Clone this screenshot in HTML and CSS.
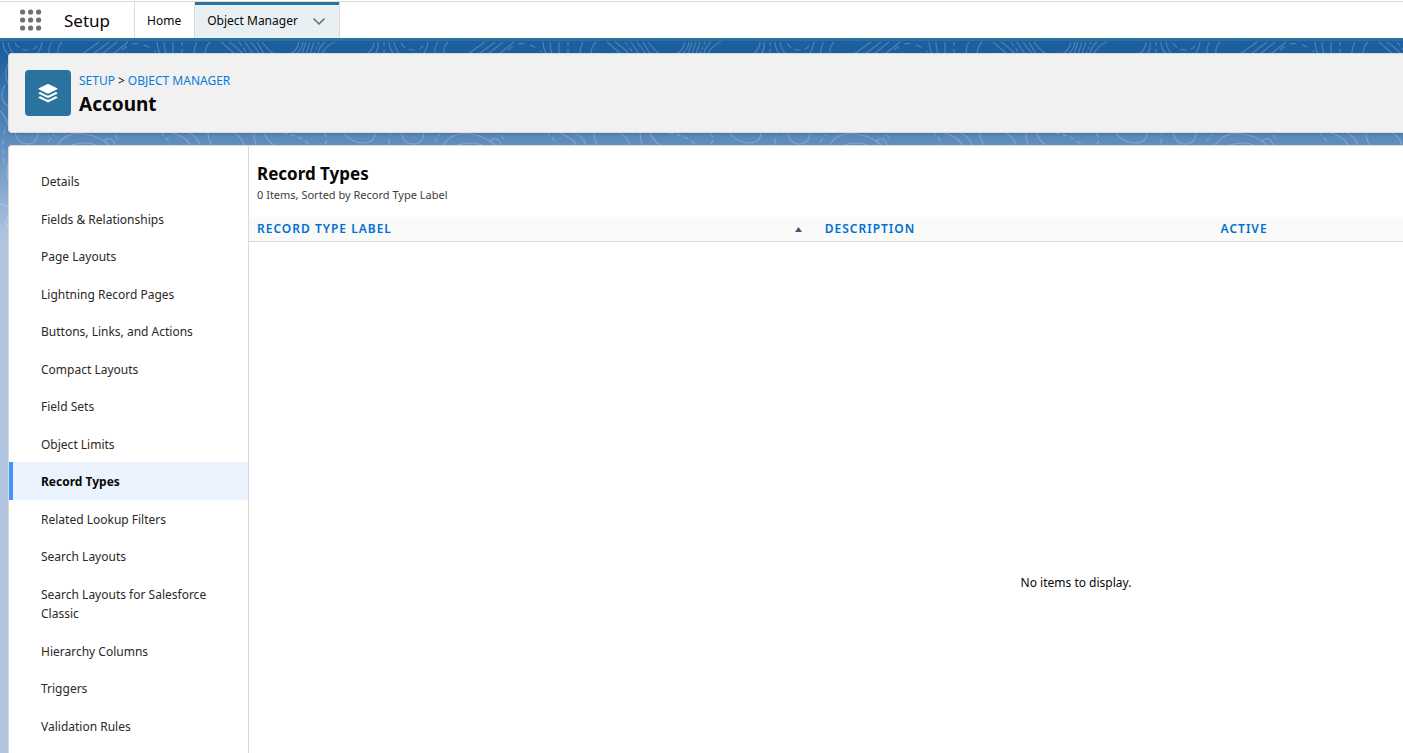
FILE: index.html
```html
<!DOCTYPE html>
<html lang="en">
<head>
<meta charset="utf-8">
<title>Account | Object Manager</title>
<link rel="stylesheet" href="styles.css">
</head>
<body>
<header class="global-nav">
  <button class="launcher" type="button" aria-label="App Launcher">
    <svg viewBox="0 0 22 22" width="22" height="22" fill="#706e6b">
      <circle cx="2.600" cy="3" r="2.600"/><circle cx="10.600" cy="3" r="2.600"/><circle cx="18.600" cy="3" r="2.600"/>
      <circle cx="2.600" cy="11" r="2.600"/><circle cx="10.600" cy="11" r="2.600"/><circle cx="18.600" cy="11" r="2.600"/>
      <circle cx="2.600" cy="19" r="2.600"/><circle cx="10.600" cy="19" r="2.600"/><circle cx="18.600" cy="19" r="2.600"/>
    </svg>
  </button>
  <span class="app-name">Setup</span>
  <nav class="tabs" aria-label="Setup">
    <a class="tab" href="#">Home</a>
    <div class="tab tab-active">
      <a href="#">Object Manager</a>
      <button class="tab-menu" type="button" aria-label="Object Manager menu">
        <svg viewBox="0 0 14 9" width="14" height="9" fill="none" stroke="#706e6b" stroke-width="1.600" stroke-linecap="round" stroke-linejoin="round"><path d="M2 2 7 7l5-5"/></svg>
      </button>
    </div>
  </nav>
</header>

<div class="stage">
  <svg class="contours" aria-hidden="true">
    <defs>
      <pattern id="contour" width="386" height="240" patternUnits="userSpaceOnUse">
        <g fill="none" stroke="#fff" stroke-width="1.200">
          <path d="M3 1c0 5 1 8 5 12M8 1c1 5 2 9 6 12M52 1q-4 5-3 12M62 1q-5 5-4 12"/>
          <path d="M42 1q-1 7-5 12"/>
          <path d="M15 2q4 7 13 7t10-8" stroke-dasharray="6 4"/>
          <path d="M82 13q10-7 17-12M93 13l16-12M102 13l15-12M113 13q9-7 15-12"/>
          <path d="M122 9q14-14 34 2" stroke-dasharray="6 6"/>
          <path d="M157 1q0 6 3 12M164 1q0 6 2 12M173 1v12M194 13q0-7 3-12M205 13q0-7 5-12"/>
          <path d="M182 1v12" stroke-dasharray="4 3"/>
          <path d="M221 1l14 12M229 1q9 6 14 12M245 1l8 12M251 1l9 12M257 1l7 12M262 1q6 8 12 12"/>
          <path d="M239 1l9 12" stroke-dasharray="5 2"/>
          <path d="M290 13q7-3 9-12M296 13q6-4 7-12M302 13l4-12M306 13l4-12M310 13l4-12M318 13q1-7 7-12M322 13q4-9 13-12"/>
          <path d="M314 13l5-12" stroke-dasharray="3 2"/>
          <path d="M367 13q7-5 7-12M375 13q4-5 3-12"/>
          <path d="M384 1v12" stroke-dasharray="4 3"/>
          <path d="M15 90q2 14 14 13 9-1 9-12"/>
          <path d="M48 101l6-8M115 94l5 7" stroke-dasharray="5 3"/>
          <path d="M57 104q10-14 28-11 14 2 24 11M104 100q8-6 11 4M72 104q14-4 24 0"/>
          <path d="M160 91q7 4 10 13" stroke-dasharray="5 3"/>
          <path d="M170 91q17 5 20 13M187 91q11 5 13 13M208 91q0 8 4 13M233 91q9 5 11 13M254 91q0 7 2 13M264 91q3 9 10 13"/>
          <path d="M282 92q18 2 28 12M324 92q6 6 0 12" stroke-dasharray="5 3"/>
          <path d="M343 91q8 11 20 11t12-11"/>
          <path d="M5 88q-4 18 0 40" stroke-dasharray="6 4"/>
          <path d="M9 20q-7 16 1 25M5 44q-8 14 4 22M0 70q6 6 8 14M9 120q-5 10 1 24M0 163q7 0 9 5M9 174q-6 7 0 14"/>
        </g>
      </pattern>
    </defs>
    <rect width="100%" height="190" fill="url(#contour)"/>
  </svg>

  <section class="page-header">
    <span class="object-icon">
      <svg viewBox="0 0 22 20" width="22" height="20" fill="#fff">
        <path d="M10.200 1.200q.8-.4 1.600 0l8.400 4.100q.7.500 0 1l-8.400 4.100q-.8.400-1.600 0L1.800 6.300q-.7-.5 0-1z"/>
        <path d="M3.200 9.100 1.800 9.800q-.7.400 0 .9l8.400 4.100q.8.400 1.600 0l8.400-4.100q.7-.5 0-.9l-1.400-.7-6.400 3.100q-1.400.600-2.800 0z"/>
        <path d="m3.200 13.300-1.400.7q-.7.400 0 .9l8.400 4.100q.8.400 1.600 0l8.400-4.100q.7-.5 0-.9l-1.400-.7-6.400 3.100q-1.400.600-2.800 0z"/>
      </svg>
    </span>
    <div>
      <nav class="breadcrumbs" aria-label="Breadcrumbs"><a href="#">SETUP</a><span>&gt;</span><a href="#">OBJECT MANAGER</a></nav>
      <h1 class="page-title">Account</h1>
    </div>
  </section>

  <div class="workspace">
    <nav class="sidebar" aria-label="Account">
      <a href="#">Details</a>
      <a href="#">Fields &amp; Relationships</a>
      <a href="#">Page Layouts</a>
      <a href="#">Lightning Record Pages</a>
      <a href="#">Buttons, Links, and Actions</a>
      <a href="#">Compact Layouts</a>
      <a href="#">Field Sets</a>
      <a href="#">Object Limits</a>
      <a class="current" href="#" aria-current="page">Record Types</a>
      <a href="#">Related Lookup Filters</a>
      <a href="#">Search Layouts</a>
      <a href="#">Search Layouts for Salesforce Classic</a>
      <a href="#">Hierarchy Columns</a>
      <a href="#">Triggers</a>
      <a href="#">Validation Rules</a>
    </nav>
    <main class="content">
      <div class="list-heading">
        <h2>Record Types</h2>
        <p>0 Items, Sorted by Record Type Label</p>
      </div>
      <table class="records">
        <thead>
          <tr>
            <th class="col-label" scope="col" aria-sort="ascending"><a href="#">RECORD TYPE LABEL<svg viewBox="0 0 7 5" width="7" height="5"><path d="M3.500 0 7 5H0z" fill="#3e5871"/></svg></a></th>
            <th class="col-description" scope="col"><a href="#">DESCRIPTION</a></th>
            <th scope="col"><a href="#">ACTIVE</a></th>
          </tr>
        </thead>
      </table>
      <div class="empty">No items to display.</div>
    </main>
  </div>
</div>
</body>
</html>
```
FILE: styles.css
```css
* {
  box-sizing: border-box;
}

body {
  margin: 0;
  min-height: 100vh;
  display: flex;
  flex-direction: column;
  font-family: "Segoe UI", "Noto Sans", "Open Sans", sans-serif;
  font-size: 12px;
  line-height: 1.625;
  color: #080707;
  background: #fff;
}

a {
  color: inherit;
  text-decoration: none;
}

button {
  display: flex;
  padding: 0;
  border: 0;
  background: none;
}

h1,
h2,
p {
  margin: 0;
}

.global-nav {
  display: flex;
  height: 40px;
  align-items: stretch;
  margin-top: 1px;
  border-top: 1px solid #dddbda;
  border-bottom: 3px solid #2a739e;
}

.launcher {
  align-items: center;
  margin-left: 20px;
}

.app-name {
  display: flex;
  align-items: center;
  padding: 2px 24px 0 22px;
  font-size: 17px;
}

.tabs {
  display: flex;
}

.tab {
  display: flex;
  align-items: center;
  padding: 2px 13px 0 12px;
  border-left: 1px solid #dddbda;
}

.tab-active {
  gap: 14px;
  border-right: 1px solid #dddbda;
  background: #e8f0f3;
  box-shadow: inset 0 3px #2a739e;
}

.stage {
  position: relative;
  flex: 1;
  display: flex;
  flex-direction: column;
  gap: 12px;
  padding: 12px 0 0 8px;
  background: linear-gradient(#1b5f9e 12px, #5a8abb 96px, #b0c4df 195px);
}

.contours {
  position: absolute;
  top: 0;
  left: 0;
  width: 100%;
  height: 190px;
  opacity: 0.22;
}

.page-header {
  position: relative;
  display: flex;
  gap: 8px;
  height: 80px;
  padding: 16px;
  border: 1px solid #dddbda;
  border-right: 0;
  border-radius: 4px 0 0 4px;
  background: #f1f1f1;
  box-shadow: 0 2px 2px rgba(0, 0, 0, 0.1);
}

.object-icon {
  display: flex;
  align-items: center;
  justify-content: center;
  width: 46px;
  height: 46px;
  border-radius: 4px;
  background: #2a739e;
}

.breadcrumbs {
  display: flex;
  gap: 3px;
  line-height: 22px;
}

.breadcrumbs a {
  color: #0a7bd6;
}

.page-title {
  font-size: 19px;
  line-height: 24px;
}

.workspace {
  position: relative;
  flex: 1;
  display: flex;
  border: 1px solid #dddbda;
  border-width: 1px 0 0 1px;
  border-radius: 4px 0 0 0;
  background: #fff;
}

.sidebar {
  flex: 0 0 240px;
  padding-top: 16px;
  border-right: 1px solid #dddbda;
}

.sidebar a {
  display: block;
  padding: 10px 32px 8px;
  color: #2b2826;
}

.sidebar .current {
  font-weight: 700;
  color: #080707;
  background: #ebf4fe;
  box-shadow: inset 4px 0 #4294ff;
}

.content {
  flex: 1;
  display: flex;
  flex-direction: column;
}

.list-heading {
  padding: 16px 8px 13px;
}

.list-heading h2 {
  font-size: 17px;
  line-height: 24px;
}

.list-heading p {
  font-size: 11px;
  line-height: 18px;
  color: #3e3e3c;
}

.records {
  width: 100%;
  table-layout: fixed;
  border-collapse: collapse;
}

.records th {
  padding: 0 8px;
  border-bottom: 1px solid #dddbda;
  background: #fafaf9;
  font-size: 12px;
  font-weight: 600;
  line-height: 24px;
  letter-spacing: 1px;
  text-align: left;
  color: #0070d2;
}

.records a {
  display: flex;
  align-items: center;
  justify-content: space-between;
}

.col-label {
  width: 49.2%;
}

.col-description {
  width: 34.3%;
}

.col-label svg {
  margin-right: 7px;
}

.empty {
  flex: 1;
  display: flex;
  align-items: center;
  justify-content: center;
  padding: 170px 0 0 500px;
}
```
